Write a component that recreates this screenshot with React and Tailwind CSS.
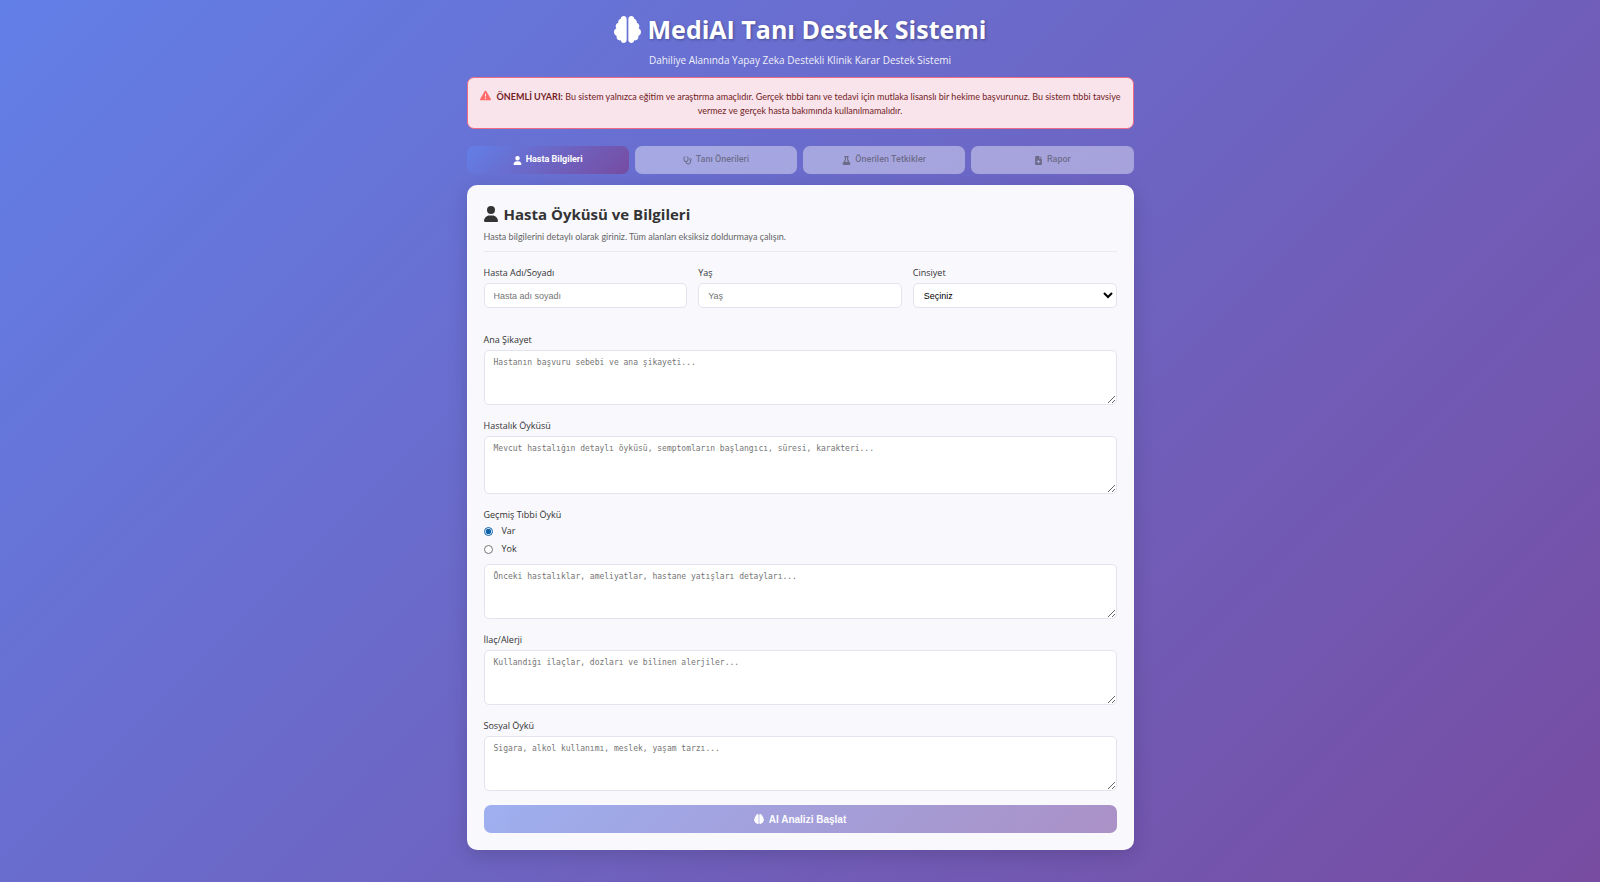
import { useState } from "react";
import {
  FaBrain,
  FaFileMedical,
  FaFlask,
  FaStethoscope,
  FaTriangleExclamation,
  FaUser,
} from "react-icons/fa6";

const tabs = [
  { label: "Hasta Bilgileri", icon: FaUser },
  { label: "Tanı Önerileri", icon: FaStethoscope },
  { label: "Önerilen Tetkikler", icon: FaFlask },
  { label: "Rapor", icon: FaFileMedical },
];

const labelClass = "block text-[9px] leading-4 font-medium text-[#333333]";
const fieldClass =
  "block h-[25px] w-full rounded-[5px] border border-[#e4e4ee] bg-white font-['Liberation_Sans',sans-serif] text-[9px] leading-3";

function TextArea({ id, placeholder, className = "h-[55px]", ...rest }) {
  return (
    <textarea
      id={id}
      placeholder={placeholder}
      className={`block w-full resize-y rounded-[5px] border border-[#e4e4ee] bg-white px-[9px] py-[6px] font-['DejaVu_Sans_Mono',monospace] text-[8px] leading-3 placeholder:text-[#757575] ${className}`}
      {...rest}
    />
  );
}

function Group({ id, label, children }) {
  return (
    <div>
      <label htmlFor={id} className={`${labelClass} mb-[2px]`}>
        {label}
      </label>
      {children}
    </div>
  );
}

export default function App() {
  const [history, setHistory] = useState("var");

  return (
    <div className="min-h-screen bg-linear-[135deg] from-[#627fe7] to-[#774ca1] px-4 pt-[11px] pb-8 font-['Open_Sans',sans-serif] text-[#333333]">
      <main className="mx-auto max-w-[667px]">
        <header className="text-center text-white">
          <h1 className="flex items-center justify-center gap-[7px] text-[25px] leading-9 font-bold [text-shadow:1px_1px_3px_rgba(0,0,0,0.3)]">
            <FaBrain className="size-[27px]" aria-hidden="true" />
            MediAI Tanı Destek Sistemi
          </h1>
          <p className="mt-[5px] text-[10px] leading-4 font-medium opacity-90">
            Dahiliye Alanında Yapay Zeka Destekli Klinik Karar Destek Sistemi
          </p>
        </header>

        <div
          role="alert"
          className="mt-[9px] rounded-[7px] border border-[#ee6b85] bg-[#f9e4ec] px-2 pt-3 pb-[10px] text-center font-['Lato',sans-serif] text-[9px] leading-[14px] text-[#721c24]"
        >
          <FaTriangleExclamation className="mr-[6px] inline size-[11px] align-[-1px] text-[#ff6b6b]" aria-hidden="true" />
          <strong>ÖNEMLİ UYARI:</strong> Bu sistem yalnızca eğitim ve araştırma amaçlıdır. Gerçek tıbbi tanı ve tedavi için mutlaka
          lisanslı bir hekime başvurunuz. Bu sistem tıbbi tavsiye vermez ve gerçek hasta bakımında kullanılmamalıdır.
        </div>

        <nav className="mt-[17px] grid grid-cols-4 gap-[6px]">
          {tabs.map(({ label, icon: Icon }, i) => (
            <button
              key={label}
              type="button"
              disabled={i > 0}
              className={`flex h-7 items-center justify-center gap-1 rounded-[7px] font-['Roboto',sans-serif] text-[9px] ${
                i === 0
                  ? "bg-linear-[135deg] from-[#627fe7] to-[#774ca1] font-bold text-white"
                  : "bg-white/40 font-medium text-[#333333]/50"
              }`}
            >
              <Icon className="size-[9px]" aria-hidden="true" />
              {label}
            </button>
          ))}
        </nav>

        <section className="mt-[11px] rounded-[10px] bg-[#f8f8fd] px-[17px] py-[17px] shadow-[0_5px_20px_rgba(0,0,0,0.15)]">
          <div className="border-b border-[#eaeaf0] pb-[6px]">
            <h2 className="flex items-center gap-[6px] text-[15px] leading-6 font-bold">
              <FaUser className="h-4 w-[14px]" aria-hidden="true" />
              Hasta Öyküsü ve Bilgileri
            </h2>
            <p className="mt-[3px] font-['Lato',sans-serif] text-[9px] leading-4 text-[#666666]">
              Hasta bilgilerini detaylı olarak giriniz. Tüm alanları eksiksiz doldurmaya çalışın.
            </p>
          </div>

          <form className="mt-[13px]" onSubmit={(e) => e.preventDefault()}>
            <div className="grid grid-cols-3 gap-[11px]">
              <Group id="name" label="Hasta Adı/Soyadı">
                <input id="name" type="text" placeholder="Hasta adı soyadı" className={`${fieldClass} px-[9px] placeholder:text-[#757575]`} />
              </Group>
              <Group id="age" label="Yaş">
                <input id="age" type="text" placeholder="Yaş" className={`${fieldClass} px-[9px] placeholder:text-[#757575]`} />
              </Group>
              <Group id="gender" label="Cinsiyet">
                <select id="gender" className={`${fieldClass} px-[6px] text-black`}>
                  <option>Seçiniz</option>
                  <option>Kadın</option>
                  <option>Erkek</option>
                </select>
              </Group>
            </div>

            <div className="mt-6 flex flex-col gap-[13px]">
              <Group id="complaint" label="Ana Şikayet">
                <TextArea id="complaint" placeholder="Hastanın başvuru sebebi ve ana şikayeti..." />
              </Group>
              <Group id="story" label="Hastalık Öyküsü">
                <TextArea
                  id="story"
                  placeholder="Mevcut hastalığın detaylı öyküsü, semptomların başlangıcı, süresi, karakteri..."
                  className="h-[58px]"
                />
              </Group>
              <fieldset>
                <legend className={labelClass}>Geçmiş Tıbbi Öykü</legend>
                <div className="mb-[7px] flex flex-col gap-[2px]">
                  {[
                    ["var", "Var"],
                    ["yok", "Yok"],
                  ].map(([value, text]) => (
                    <label key={value} className="flex items-center gap-[9px] text-[9px] leading-4">
                      <input
                        type="radio"
                        name="history"
                        value={value}
                        checked={history === value}
                        onChange={() => setHistory(value)}
                        className="size-[9px] accent-[#0e62a8]"
                      />
                      {text}
                    </label>
                  ))}
                </div>
                <TextArea
                  aria-label="Geçmiş Tıbbi Öykü"
                  placeholder="Önceki hastalıklar, ameliyatlar, hastane yatışları detayları..."
                />
              </fieldset>
              <Group id="meds" label="İlaç/Alerji">
                <TextArea id="meds" placeholder="Kullandığı ilaçlar, dozları ve bilinen alerjiler..." />
              </Group>
              <Group id="social" label="Sosyal Öykü">
                <TextArea id="social" placeholder="Sigara, alkol kullanımı, meslek, yaşam tarzı..." />
              </Group>
            </div>

            <button
              type="submit"
              disabled
              className="mt-[14px] flex h-7 w-full items-center justify-center gap-[5px] rounded-[7px] bg-linear-[135deg] from-[#627fe7] to-[#774ca1] font-['Liberation_Sans',sans-serif] text-[10px] font-bold text-white opacity-60"
            >
              <FaBrain className="size-[10px]" aria-hidden="true" />
              AI Analizi Başlat
            </button>
          </form>
        </section>
      </main>
    </div>
  );
}
